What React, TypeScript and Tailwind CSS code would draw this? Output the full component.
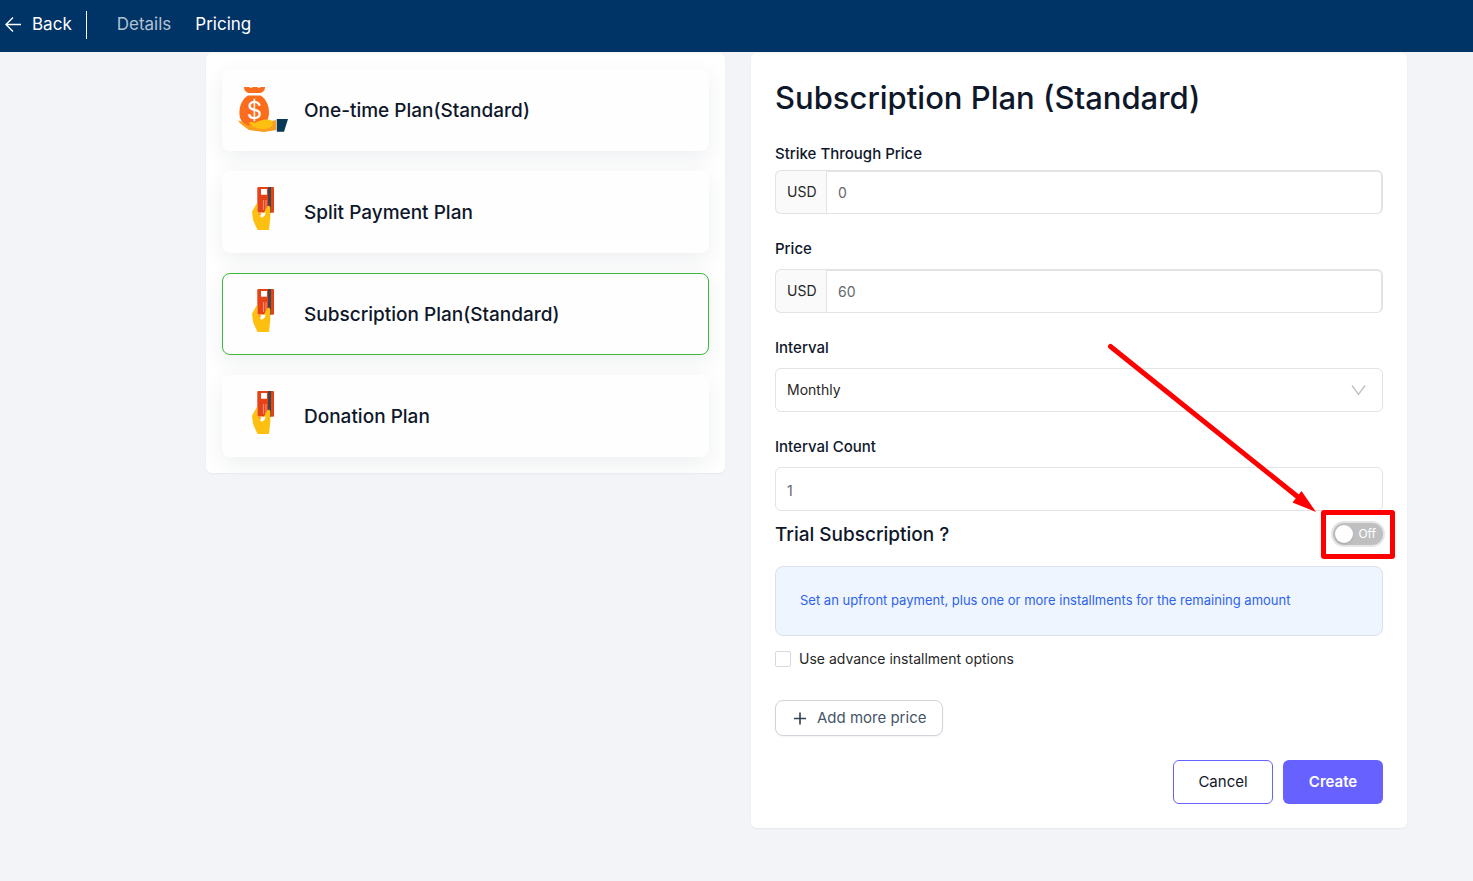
import React, { useState } from 'react';

interface Plan {
    id: string;
    name: string;
    icon: 'bag' | 'card';
}

const plans: Plan[] = [
    { id: 'one-time', name: 'One-time Plan(Standard)', icon: 'bag' },
    { id: 'split', name: 'Split Payment Plan', icon: 'card' },
    { id: 'subscription', name: 'Subscription Plan(Standard)', icon: 'card' },
    { id: 'donation', name: 'Donation Plan', icon: 'card' },
];

const BagIcon = () => (
    <svg viewBox="0 0 50 50" className="h-[50px] w-[50px] shrink-0" aria-hidden="true">
        <path d="M6 2h5l2 1L15 2h4l2 1L23 2h4c0 4-3 6-6 6h-9C9 8 6 6 6 2z" fill="#fb6d1d" />
        <path d="M10 10.500h12.500c5 3 8.500 9.500 8.500 17 0 9-5 14.500-14.800 14.500S1.400 36.500 1.400 27.500C1.400 20 5 13.500 10 10.500z" fill="#fb6d1d" />
        <text x="16.400" y="34" textAnchor="middle" fontSize="24" fontWeight="400" fill="#fff" fontFamily="Inter, sans-serif">$</text>
        <path d="M0 35.500c2 0 3.500 1 6 2.500 2.500 2 4 3 7 2l25.500-5V45L26 47l-15-2C7 42 2 39 0 35.500z" fill="#fb9d1e" />
        <path d="M11 38c1.500-1.500 4-1 6 0 3-2 8-3.500 12-3.500 5 0 7 2.500 5.500 5.500-1.500 2.500-5 4-9.500 4-6 0-11-2-14-6z" fill="#fdc010" />
        <path d="M39 34h11l-4 12.700h-7z" fill="#073956" />
        <path d="M38.300 34v12.700" stroke="#a9c0cc" strokeWidth=".8" />
    </svg>
);

const CardIcon = () => (
    <svg viewBox="0 0 50 50" className="h-[50px] w-[50px] shrink-0" aria-hidden="true">
        <rect x="19.300" y="0" width="16.700" height="25.700" rx="1" fill="#e64218" />
        <path d="M30 0h3v25.700h-3z" fill="#444546" />
        <path d="M23 2h6v5.700h-6z" fill="#fff" />
        <path d="M25.500 13v10M28 13v10" stroke="#f08a6d" strokeWidth="1.200" />
        <path d="M19.300 15.300v10.400h6.500l3.200-6c.6-1.600 3-1.500 3.300 1v10.300l-1.300 12H19.500L15 33l-1-8.300z" fill="#fdc010" />
        <path d="M22 25.700h5.500c.3 2-2 4.800-4 4.800-1.500-.5-1.300-2.500-1.500-4.800z" fill="#fff" />
        <path d="M19.300 24.500l3 1.200 1 2.500-2.500-.8z" fill="#fb9d1e" />
    </svg>
);

const Label = ({ htmlFor, children }: { htmlFor: string; children: React.ReactNode }) => (
    <label htmlFor={htmlFor} className="text-[15px] font-medium leading-6">{children}</label>
);

interface PriceInputProps {
    id: string;
    value: string;
    onChange: (value: string) => void;
}

const PriceInput: React.FC<PriceInputProps> = ({ id, value, onChange }) => (
    <div className="flex h-11">
        <span className="flex w-[51px] items-center rounded-l-md border border-r-0 border-[#e3e3e3] bg-[#fafafa] pl-[11px] text-sm text-[#262626]">
            USD
        </span>
        <input
            id={id}
            value={value}
            onChange={(e) => onChange(e.target.value)}
            className="min-w-0 grow rounded-r-md border border-t-2 border-r-2 border-[#e3e3e3] bg-white px-[11px] text-sm text-[#64686d] outline-none"
        />
    </div>
);

const App: React.FC = () => {
    const [selected, setSelected] = useState('subscription');
    const [strikePrice, setStrikePrice] = useState('0');
    const [price, setPrice] = useState('60');
    const [count, setCount] = useState('1');
    const [trial, setTrial] = useState(false);

    return (
        <div className="min-h-screen bg-[#f2f4f8] font-['Inter',sans-serif] text-[#0f172a]">
            <header className="flex h-[52px] items-center bg-[#003366] pb-[3px] pl-1 text-[17px] text-white">
                <a href="#back" className="flex items-center gap-[10px]">
                    <svg viewBox="0 0 18 18" className="h-[18px] w-[18px]" fill="none" stroke="currentColor" strokeWidth="1.400" aria-hidden="true">
                        <path d="M17 8.500H2M9 1.500l-7 7 7 7" />
                    </svg>
                    Back
                </a>
                <span className="ml-[14px] h-7 w-px bg-white" />
                <nav className="ml-[30px] flex gap-6">
                    <a href="#details" className="text-[#b3c2d1]">Details</a>
                    <a href="#pricing">Pricing</a>
                </nav>
            </header>

            <main className="grid grid-cols-[519fr_656fr] items-start gap-[26px] pt-px pr-[66px] pb-[53px] pl-[206px]">
                {/* Plan list */}
                <section className="flex flex-col gap-5 overflow-hidden rounded-md bg-white p-4 shadow-xs">
                    {plans.map((plan) => (
                        <button
                            key={plan.id}
                            type="button"
                            onClick={() => setSelected(plan.id)}
                            className={`flex items-center gap-4 rounded-lg border bg-[#fefefe] p-[15px] text-left text-[19px] font-medium shadow-[0_7px_22px_rgba(30,50,60,0.08)] ${
                                selected === plan.id ? 'border-[#3db83a]' : 'border-transparent'
                            }`}
                        >
                            {plan.icon === 'bag' ? <BagIcon /> : <CardIcon />}
                            <span className="pt-0.5">{plan.name}</span>
                        </button>
                    ))}
                </section>

                {/* Plan form */}
                <form className="rounded-md bg-white p-6 shadow-xs" onSubmit={(e) => e.preventDefault()}>
                    <h1 className="text-[31px] font-medium leading-[42px]">Subscription Plan (Standard)</h1>

                    <div className="mt-[23px] flex flex-col gap-[23px]">
                        <div className="flex flex-col gap-1">
                            <Label htmlFor="strike">Strike Through Price</Label>
                            <PriceInput id="strike" value={strikePrice} onChange={setStrikePrice} />
                        </div>
                        <div className="flex flex-col gap-2">
                            <Label htmlFor="price">Price</Label>
                            <PriceInput id="price" value={price} onChange={setPrice} />
                        </div>
                        <div className="flex flex-col gap-2">
                            <Label htmlFor="interval">Interval</Label>
                            <div className="relative">
                                <select
                                    id="interval"
                                    defaultValue="Monthly"
                                    className="h-11 w-full appearance-none rounded-md border border-[#e3e3e3] bg-white px-[11px] text-sm text-[#262626] outline-none"
                                >
                                    <option>Daily</option>
                                    <option>Weekly</option>
                                    <option>Monthly</option>
                                    <option>Yearly</option>
                                </select>
                                <svg viewBox="0 0 16 12" className="pointer-events-none absolute top-4 right-4 h-3 w-4" fill="none" stroke="#bfbfbf" strokeWidth="1.300" aria-hidden="true">
                                    <path d="M1 1.500l6.500 9 6.500-9" />
                                </svg>
                            </div>
                        </div>
                        <div className="flex flex-col gap-2">
                            <Label htmlFor="count">Interval Count</Label>
                            <input
                                id="count"
                                value={count}
                                onChange={(e) => setCount(e.target.value)}
                                className="h-11 rounded-md border border-[#e3e3e3] bg-white px-[11px] pt-0.5 text-sm text-[#64686d] outline-none"
                            />
                        </div>
                    </div>

                    <div className="mt-[11px] flex h-6 items-center justify-between">
                        <span id="trial-label" className="pt-0.5 text-[19px] font-medium">Trial Subscription ?</span>
                        <div className="relative">
                            <button
                                type="button"
                                role="switch"
                                aria-checked={trial}
                                aria-labelledby="trial-label"
                                onClick={() => setTrial(!trial)}
                                className={`flex h-[22px] w-[50px] items-center justify-between rounded-full pr-[7px] pl-0.5 text-xs text-white ring-2 ring-[#e5e5e5] ${
                                    trial ? 'flex-row-reverse bg-[#6661ff]' : 'bg-[#bfbfbf]'
                                }`}
                            >
                                <span className="h-[18px] w-[18px] rounded-full bg-white shadow" />
                                {trial ? 'On' : 'Off'}
                            </button>
                            {/* Callout around the switch */}
                            <svg
                                viewBox="0 0 290 220"
                                className="pointer-events-none absolute -right-3 -bottom-[14px] h-[220px] w-[290px] max-w-none"
                                aria-hidden="true"
                            >
                                <rect x="218.500" y="173.500" width="69" height="44" rx=".5" fill="none" stroke="#fe0000" strokeWidth="5" strokeLinejoin="round" />
                                <path d="M5.500 7.500L193 158" stroke="#fe0000" strokeWidth="5" strokeLinecap="round" />
                                <path d="M211 173l-14.500-21-9 11.500z" fill="#fe0000" />
                            </svg>
                        </div>
                    </div>

                    <div className="mt-5 flex h-[70px] items-center rounded-lg border border-[#dae1eb] bg-[#eef5ff] px-6 text-[13px] text-[#2f63eb]">
                        Set an upfront payment, plus one or more installments for the remaining amount
                    </div>

                    <label className="mt-[11px] flex h-6 items-center gap-2 text-sm text-[#262626]">
                        <input type="checkbox" className="h-4 w-4 appearance-none rounded-xs border border-[#d9d9d9] bg-white checked:bg-[#6661ff]" />
                        Use advance installment options
                    </label>

                    <button
                        type="button"
                        className="mt-[29px] flex h-9 items-center gap-[9px] rounded-lg border border-[#d1d5db] bg-white px-4 text-[15px] text-[#475569] shadow-xs"
                    >
                        <svg viewBox="0 0 16 16" className="h-4 w-4" stroke="#334155" strokeWidth="1.600" aria-hidden="true">
                            <path d="M8 2.500v12M2 8.500h12" />
                        </svg>
                        Add more price
                    </button>

                    <div className="mt-6 flex justify-end gap-[10px]">
                        <button type="button" className="h-11 w-[100px] rounded-md border border-[#6661ff] bg-white text-[15px]">
                            Cancel
                        </button>
                        <button type="submit" className="h-11 w-[100px] rounded-md bg-[#6661ff] text-[15px] font-semibold text-white">
                            Create
                        </button>
                    </div>
                </form>
            </main>
        </div>
    );
};

export default App;
